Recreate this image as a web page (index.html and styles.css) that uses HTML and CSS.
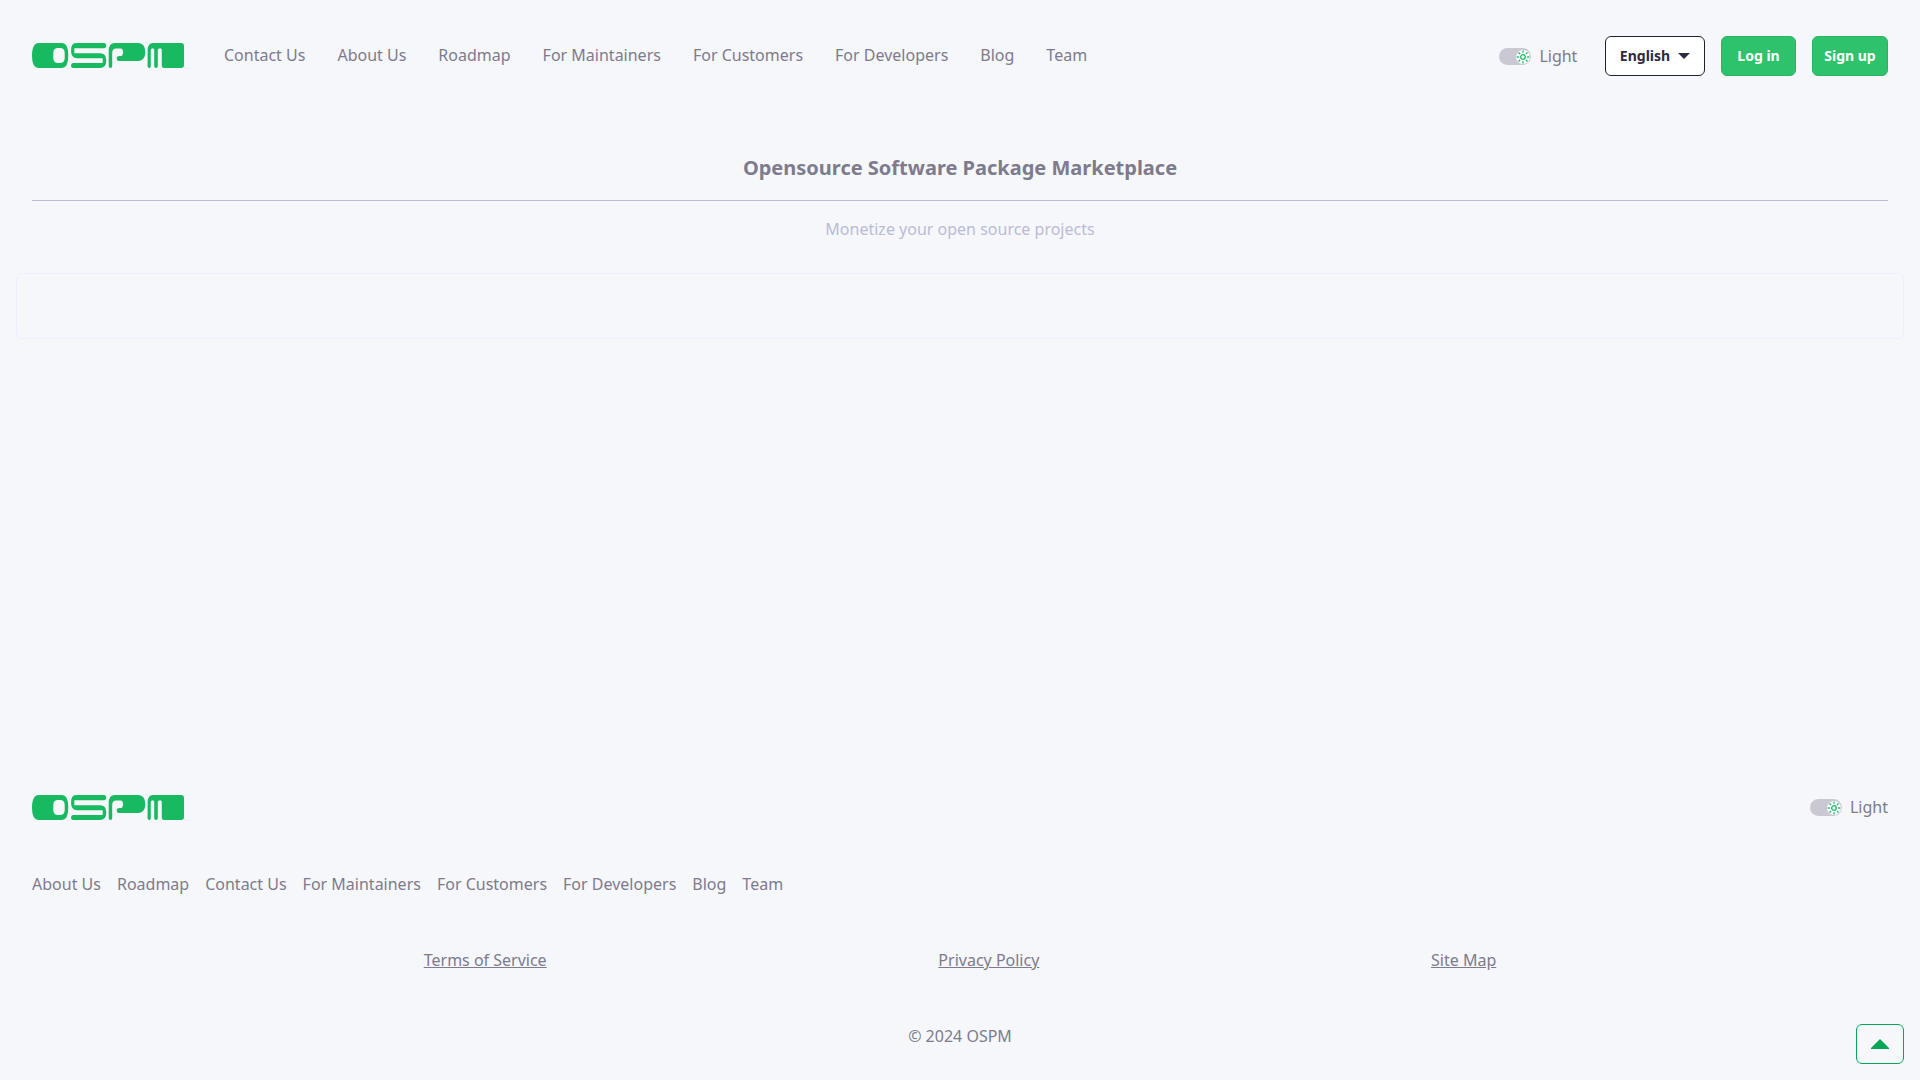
FILE: index.html
```html
<!DOCTYPE html>
<html lang="en">
<head>
<meta charset="utf-8">
<title>OSPM</title>
<link rel="stylesheet" href="styles.css">
</head>
<body>
<svg width="0" height="0" class="defs" aria-hidden="true">
  <symbol id="logo" viewBox="0 0 152 25">
    <path fill-rule="evenodd" d="M7 0H30Q36.3 0 36.3 12.5T30 25H7Q0 25 0 12.5T7 0ZM26 5Q21.3 5 21.3 10V15Q21.3 20 26 20H28Q32.7 20 32.7 15V10Q32.7 5 28 5Z"/>
    <path d="M44 0H72Q74.3 0 74.3 2.6T72 5.2H42.3V10.2H68Q74.3 10.2 74.3 17.5T68 25H41Q39 25 39 22.5T41 20H70.7V15.2H45Q39 15.2 39 7.6T44 0Z"/>
    <path d="M83 0H107Q113.3 1 113.3 9T107 18H87Q84.7 18 84.7 15.5T87 13H89Q91 13 91 9T88 5.5H84Q80.2 5.5 80.2 10V23Q80.2 25 78.5 25T76.7 23V8Q76.7 0 83 0Z"/>
    <path d="M121 0H149Q152 0 152 3V22Q152 25 149 25H132Q129.8 25 129.8 22V7Q129.8 5.3 128 5.3T125.8 7V23Q125.8 25 124 25T122.2 23V7Q122.2 5.3 120.6 5.3T118.8 7V23Q118.8 25 117.2 25T115.6 23V8Q115.6 0 121 0Z"/>
  </symbol>
  <symbol id="sun" viewBox="0 0 14 14">
    <circle cx="7" cy="7" r="2.3"/>
    <path d="M7 .6V2.8M7 11.2V13.4M.6 7H2.8M11.2 7H13.4M2.5 2.5 4 4M10 10 11.5 11.5M11.5 2.5 10 4M4 10 2.5 11.5"/>
  </symbol>
</svg>
<div class="page">
  <header class="header">
    <svg class="logo"><use href="#logo"/></svg>
    <nav class="nav">
      <a>Contact Us</a><a>About Us</a><a>Roadmap</a><a>For Maintainers</a><a>For Customers</a><a>For Developers</a><a>Blog</a><a>Team</a>
    </nav>
    <div class="theme"><span class="switch"><svg class="sun"><use href="#sun"/></svg></span><span>Light</span></div>
    <button class="btn language">English <svg class="caret" viewBox="0 0 12 6"><path d="M0 0H12L6 6Z"/></svg></button>
    <button class="btn primary login">Log in</button>
    <button class="btn primary signup">Sign up</button>
  </header>
  <main class="main">
    <h1 class="title">Opensource Software Package Marketplace</h1>
    <p class="subtitle">Monetize your open source projects</p>
    <section class="panel"></section>
  </main>
  <footer class="footer">
    <div class="footer-top">
      <svg class="logo"><use href="#logo"/></svg>
      <div class="theme"><span class="switch"><svg class="sun"><use href="#sun"/></svg></span><span>Light</span></div>
    </div>
    <nav class="footer-nav">
      <a>About Us</a><a>Roadmap</a><a>Contact Us</a><a>For Maintainers</a><a>For Customers</a><a>For Developers</a><a>Blog</a><a>Team</a>
    </nav>
    <div class="legal"><a>Terms of Service</a><a>Privacy Policy</a><a>Site Map</a></div>
    <p class="copyright">© 2024 OSPM</p>
  </footer>
</div>
<button class="to-top" aria-label="Back to top"><svg viewBox="0 0 18 10"><path d="M9 0 18 9V10H0V9Z"/></svg></button>
</body>
</html>
```

FILE: styles.css
```css
* { box-sizing: border-box; }
body {
  margin: 0;
  background: #f5f7fb;
  color: #7e7b8d;
  font: 16px/24px "Noto Sans", sans-serif;
}
h1, p { margin: 0; }
.defs { position: absolute; }
.page {
  display: flex;
  flex-direction: column;
  height: 1080px;
}
.header {
  display: flex;
  align-items: center;
  height: 112px;
  padding: 0 32px;
}
.logo {
  display: block;
  width: 152px;
  height: 25px;
  fill: #18ba61;
}
.header .logo { margin-top: -1px; }
.nav {
  display: flex;
  gap: 32px;
  margin: -2px 0 0 40px;
}
.theme {
  display: flex;
  align-items: center;
  gap: 8px;
  height: 24px;
}
.header .theme { margin: 0 27.6px 0 auto; }
.switch {
  display: flex;
  align-items: center;
  justify-content: flex-end;
  width: 32px;
  height: 17px;
  margin-top: 1px;
  padding-right: 1px;
  border-radius: 9px;
  background: #cac8d2;
}
.sun {
  width: 14px;
  height: 14px;
  border-radius: 50%;
  background: #fff;
  fill: none;
  stroke: #18ba61;
  stroke-width: 1.3;
}
.btn {
  display: flex;
  align-items: center;
  justify-content: center;
  height: 40px;
  padding: 0;
  border: 1px solid #22222f;
  border-radius: 6px;
  font: bold 14px/20px "Noto Sans", sans-serif;
}
.language {
  gap: 8px;
  width: 100px;
  background: #fff;
  color: #2b2b40;
}
.caret {
  width: 12px;
  height: 6px;
  fill: #2b2b40;
}
.primary {
  margin-left: 16px;
  border-color: #28b463;
  background: #2dc26b;
  color: #fff;
}
.login { width: 75px; }
.signup { width: 76px; }
.main { padding: 40px 16px 0; }
.title {
  height: 49px;
  margin: 0 16px;
  border-bottom: 1px solid #bbbbd6;
  font-size: 20px;
  line-height: 32px;
  text-align: center;
}
.subtitle {
  padding: 16px 0 32px;
  color: #bbbbd6;
  text-align: center;
}
.panel {
  height: 66px;
  border: 1px solid #eeeeff;
  border-radius: 6px;
}
.footer {
  margin-top: auto;
  padding: 0 32px 32px;
}
.footer-top {
  display: flex;
  align-items: flex-start;
  justify-content: space-between;
  height: 25px;
}
.footer-nav {
  display: flex;
  gap: 16px;
  margin-top: 52px;
}
.legal {
  display: flex;
  justify-content: space-evenly;
  margin-top: 52px;
  text-decoration: underline;
}
.copyright {
  margin-top: 52px;
  text-align: center;
}
.to-top {
  position: fixed;
  right: 16px;
  bottom: 16px;
  display: flex;
  align-items: center;
  justify-content: center;
  width: 48px;
  height: 40px;
  padding: 0;
  border: 1px solid #05a658;
  border-radius: 6px;
  background: #f5f7fb;
}
.to-top svg {
  width: 18px;
  height: 10px;
  fill: #05a658;
}
```
